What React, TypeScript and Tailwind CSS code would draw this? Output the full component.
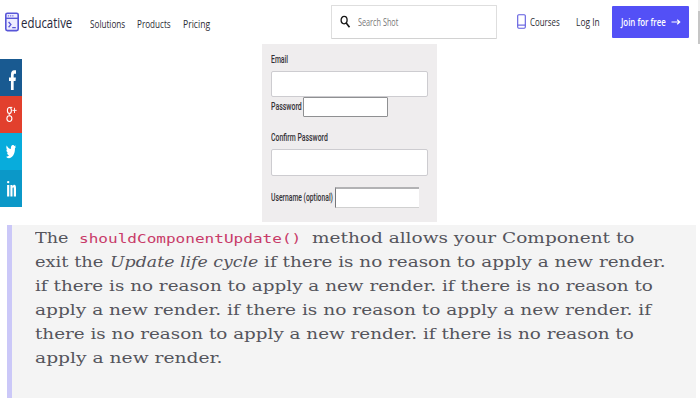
import { useLayoutEffect, useRef, useState } from "react";
import type { ReactNode } from "react";

/* Text stretched or squeezed horizontally to an exact width. */
function Fit({ w, className = "", children }: { w: number; className?: string; children: ReactNode }) {
  const ref = useRef<HTMLSpanElement>(null);
  const [scale, setScale] = useState(1);
  useLayoutEffect(() => {
    if (ref.current) setScale(w / ref.current.offsetWidth);
  }, [w]);
  return (
    <span className="block shrink-0 leading-[0] whitespace-nowrap" style={{ width: w }}>
      <span ref={ref} className={`inline-block origin-left align-top ${className}`} style={{ transform: `scaleX(${scale})` }}>
        {children}
      </span>
    </span>
  );
}

const nav = "font-['Open_Sans',sans-serif] text-[10.5px] leading-4 font-medium text-[#2c2c34]";
const label = "font-['Roboto',sans-serif] text-[10.5px] leading-3 font-medium text-[#343236]";

function Header() {
  return (
    <header className="flex h-11 items-start">
      <svg className="mt-3 ml-[5px] h-5 w-[14px] shrink-0" viewBox="0 0 14 20" fill="none" stroke="#5856d8">
        <rect x="0.8" y="1.2" width="12.4" height="17.4" rx="1.6" fill="#eeedff" strokeWidth="1.6" />
        <path d="M1 6.3h12" strokeWidth="1.4" />
        <path d="M2.8 3.9h1.3M5 3.9h1.3M7.2 3.9h1.3" strokeWidth="1" />
        <path d="M3.6 10l2.3 2.6-2.3 2.6M7.2 15.6h3.6" strokeWidth="1.3" />
      </svg>
      <div className="mt-[12px] ml-[2px]">
        <Fit w={51} className="font-['Open_Sans',sans-serif] text-[15px] leading-5 font-medium text-[#27273a]">educative</Fit>
      </div>
      <nav className="mt-4 ml-[18px] flex gap-3">
        <Fit w={35} className={nav}>Solutions</Fit>
        <Fit w={34} className={nav}>Products</Fit>
        <Fit w={27} className={nav}>Pricing</Fit>
      </nav>
      <div className="mt-[5px] ml-[121px] flex h-[34px] w-[166px] items-center rounded-[1px] border border-[#dedede] border-b-[#d2d2d2] bg-white">
        <svg className="ml-2 h-[14px] w-[11px]" viewBox="0 0 11 14" fill="none" stroke="#151515">
          <ellipse cx="4.1" cy="5.1" rx="3" ry="3.7" strokeWidth="1.3" />
          <path d="M6.2 8l3.3 4.200" strokeWidth="1.6" />
        </svg>
        <div className="ml-[7px]">
          <Fit w={40} className="font-['Open_Sans',sans-serif] text-[10px] leading-4 text-[#777777]">Search Shot</Fit>
        </div>
      </div>
      <svg className="mt-[14px] ml-5 h-[15px] w-[9px] shrink-0" viewBox="0 0 9 15" fill="none" stroke="#5d59df" strokeWidth="1.1">
        <rect x="0.7" y="0.7" width="7.6" height="13.5" rx="1.1" />
        <path d="M0.7 11.1h7.6" />
      </svg>
      <div className="mt-[14px] ml-1 flex gap-4">
        <Fit w={30} className={nav}>Courses</Fit>
        <Fit w={24} className={nav}>Log In</Fit>
      </div>
      <div className="mt-[6px] ml-3 flex h-8 w-[77px] shrink-0 items-center rounded-[1px] bg-[#5350f6]">
        <div className="-mt-px ml-[9px]">
          <Fit w={45} className="font-['Open_Sans',sans-serif] text-[10.5px] leading-4 font-semibold text-white">Join for free</Fit>
        </div>
        <svg className="ml-[5px] h-2 w-[10px]" viewBox="0 0 10 8" fill="none" stroke="#ffffff" strokeWidth="1.2">
          <path d="M0.5 4h8M6.2 1.7L8.7 4 6.2 6.3" />
        </svg>
      </div>
      <div className="ml-auto h-11 w-[2px] bg-[#f0f0f0] pt-[11px]">
        <div className="h-[33px] bg-[#c6c6c6]" />
      </div>
    </header>
  );
}

function Social() {
  return (
    <aside className="mt-[15px] w-[22px] shrink-0">
      <div className="flex h-[37px] items-center justify-end bg-[#195a91] pr-[6px] pt-[5px]">
        <svg className="h-5 w-[7px]" viewBox="0 0 9 20" preserveAspectRatio="none" fill="#ffffff">
          <path d="M2.5 20v-9H0V7.5h2.5V5C2.5 1.8 4 .3 6.6.3H9v3.5H7.4C6.3 3.8 6 4.3 6 5.4v2.1h2.8L8.4 11H6v9z" />
        </svg>
      </div>
      <div className="flex h-[37px] items-center justify-end bg-[#e2402d] pr-[5px]">
        <svg className="h-[17px] w-[11px]" viewBox="0 0 11 17" fill="none" stroke="#ffffff">
          <ellipse cx="3.4" cy="4.5" rx="2" ry="3" strokeWidth="1.1" />
          <path d="M3.3 1.4h3M4.4 7.3C2.7 8 2.8 9 4.2 9.7" strokeWidth="1" />
          <ellipse cx="3.4" cy="12.6" rx="2.5" ry="2.9" strokeWidth="1.1" />
          <path d="M6.4 4.4h4.2M8.5 1.8v5.2" strokeWidth="0.9" />
        </svg>
      </div>
      <div className="flex h-[37px] items-center justify-end bg-[#08acdc] pr-[6px]">
        <svg className="h-[14px] w-[10px]" viewBox="1 3 22 19" preserveAspectRatio="none" fill="#ffffff">
          <path d="M23 5.1c-.8.4-1.7.6-2.6.7.9-.6 1.6-1.5 2-2.5-.9.5-1.8.9-2.9 1.1a4.5 4.5 0 0 0-7.7 4.1C8 8.3 4.7 6.5 2.5 3.8a4.5 4.5 0 0 0 1.4 6c-.7 0-1.4-.2-2-.6 0 2.2 1.5 4.1 3.6 4.5-.7.2-1.4.2-2 .1.6 1.8 2.2 3.1 4.2 3.1A9 9 0 0 1 1 18.8a12.8 12.8 0 0 0 19.7-11.4c.9-.6 1.7-1.4 2.3-2.3z" />
        </svg>
      </div>
      <div className="flex h-[37px] items-center justify-end bg-[#0b98c8] pr-[6px]">
        <svg className="h-[17px] w-[9px]" viewBox="0 0 9 17" fill="#ffffff">
          <circle cx="1.2" cy="2.1" r="1.2" />
          <path d="M.1 5h2.2v11.5H.1zM3.4 5h2.100v1.5C6 5.3 6.6 4.8 7.300 4.8 8.6 4.8 9 6 9 8.2v8.300H6.800V9c0-1-.1-1.700-.6-1.700s-.7.700-.7 1.700v7.500h-2.100z" />
        </svg>
      </div>
    </aside>
  );
}

function SignupForm() {
  return (
    <form className="ml-60 h-[178px] w-[175px] bg-[#efedee] pl-[9px] pt-[10px]">
      <Fit w={17} className={label}>Email</Fit>
      <input className="mt-[5px] block h-[26px] w-[157px] rounded-[2px] border border-[#cdccd0] bg-white" />
      <div className="flex items-center">
        <Fit w={30.5} className={label}>Password</Fit>
        <input className="ml-[1.5px] h-5 w-[85px] rounded-[1px] border border-[#8f9092] bg-white" />
      </div>
      <div className="mt-[15px]">
        <Fit w={57} className={label}>Confirm Password</Fit>
      </div>
      <input className="mt-[5px] block h-[27px] w-[157px] rounded-[2px] border border-[#cdccd0] bg-white" />
      <div className="mt-[11px] flex items-center">
        <Fit w={62} className={label}>Username (optional)</Fit>
        <input className="ml-[2px] h-[21px] w-[84px] border-t-2 border-b border-l border-t-[#b2b2b4] border-b-[#d0d0d0] border-l-[#77787c] bg-white" />
      </div>
    </form>
  );
}

const prose = "font-['DejaVu_Serif',serif] text-[15px] leading-6 text-[#55555c]";

function Note() {
  return (
    <section className="ml-[7px] h-[173px] w-[689px] border-l-[5px] border-[#cbc8f8] bg-[#f4f4f4] pt-px pl-[23px]">
      <div className="flex h-6">
        <Fit w={34} className={prose}>The</Fit>
        <div className="ml-[10px]">
          <Fit w={222} className="font-['DejaVu_Sans_Mono',monospace] text-[12px] leading-[26px] text-[#c83b69]">shouldComponentUpdate()</Fit>
        </div>
        <div className="ml-[11px]">
          <Fit w={323} className={prose}>method allows your Component to</Fit>
        </div>
      </div>
      <div className="flex h-6 gap-[6px]">
        <Fit w={69} className={prose}>exit the</Fit>
        <Fit w={148} className={`${prose} italic`}>Update life cycle</Fit>
        <Fit w={402} className={prose}>if there is no reason to apply a new render.</Fit>
      </div>
      <div className="h-6"><Fit w={618} className={prose}>if there is no reason to apply a new render. if there is no reason to</Fit></div>
      <div className="h-6"><Fit w={616} className={prose}>apply a new render. if there is no reason to apply a new render. if</Fit></div>
      <div className="h-6"><Fit w={599} className={prose}>there is no reason to apply a new render. if there is no reason to</Fit></div>
      <div className="h-6"><Fit w={188} className={prose}>apply a new render.</Fit></div>
    </section>
  );
}

export default function App() {
  return (
    <div className="h-[400px] w-[700px] overflow-hidden bg-white">
      <Header />
      <main>
        <div className="flex h-[181px]">
          <Social />
          <SignupForm />
        </div>
        <Note />
      </main>
    </div>
  );
}
